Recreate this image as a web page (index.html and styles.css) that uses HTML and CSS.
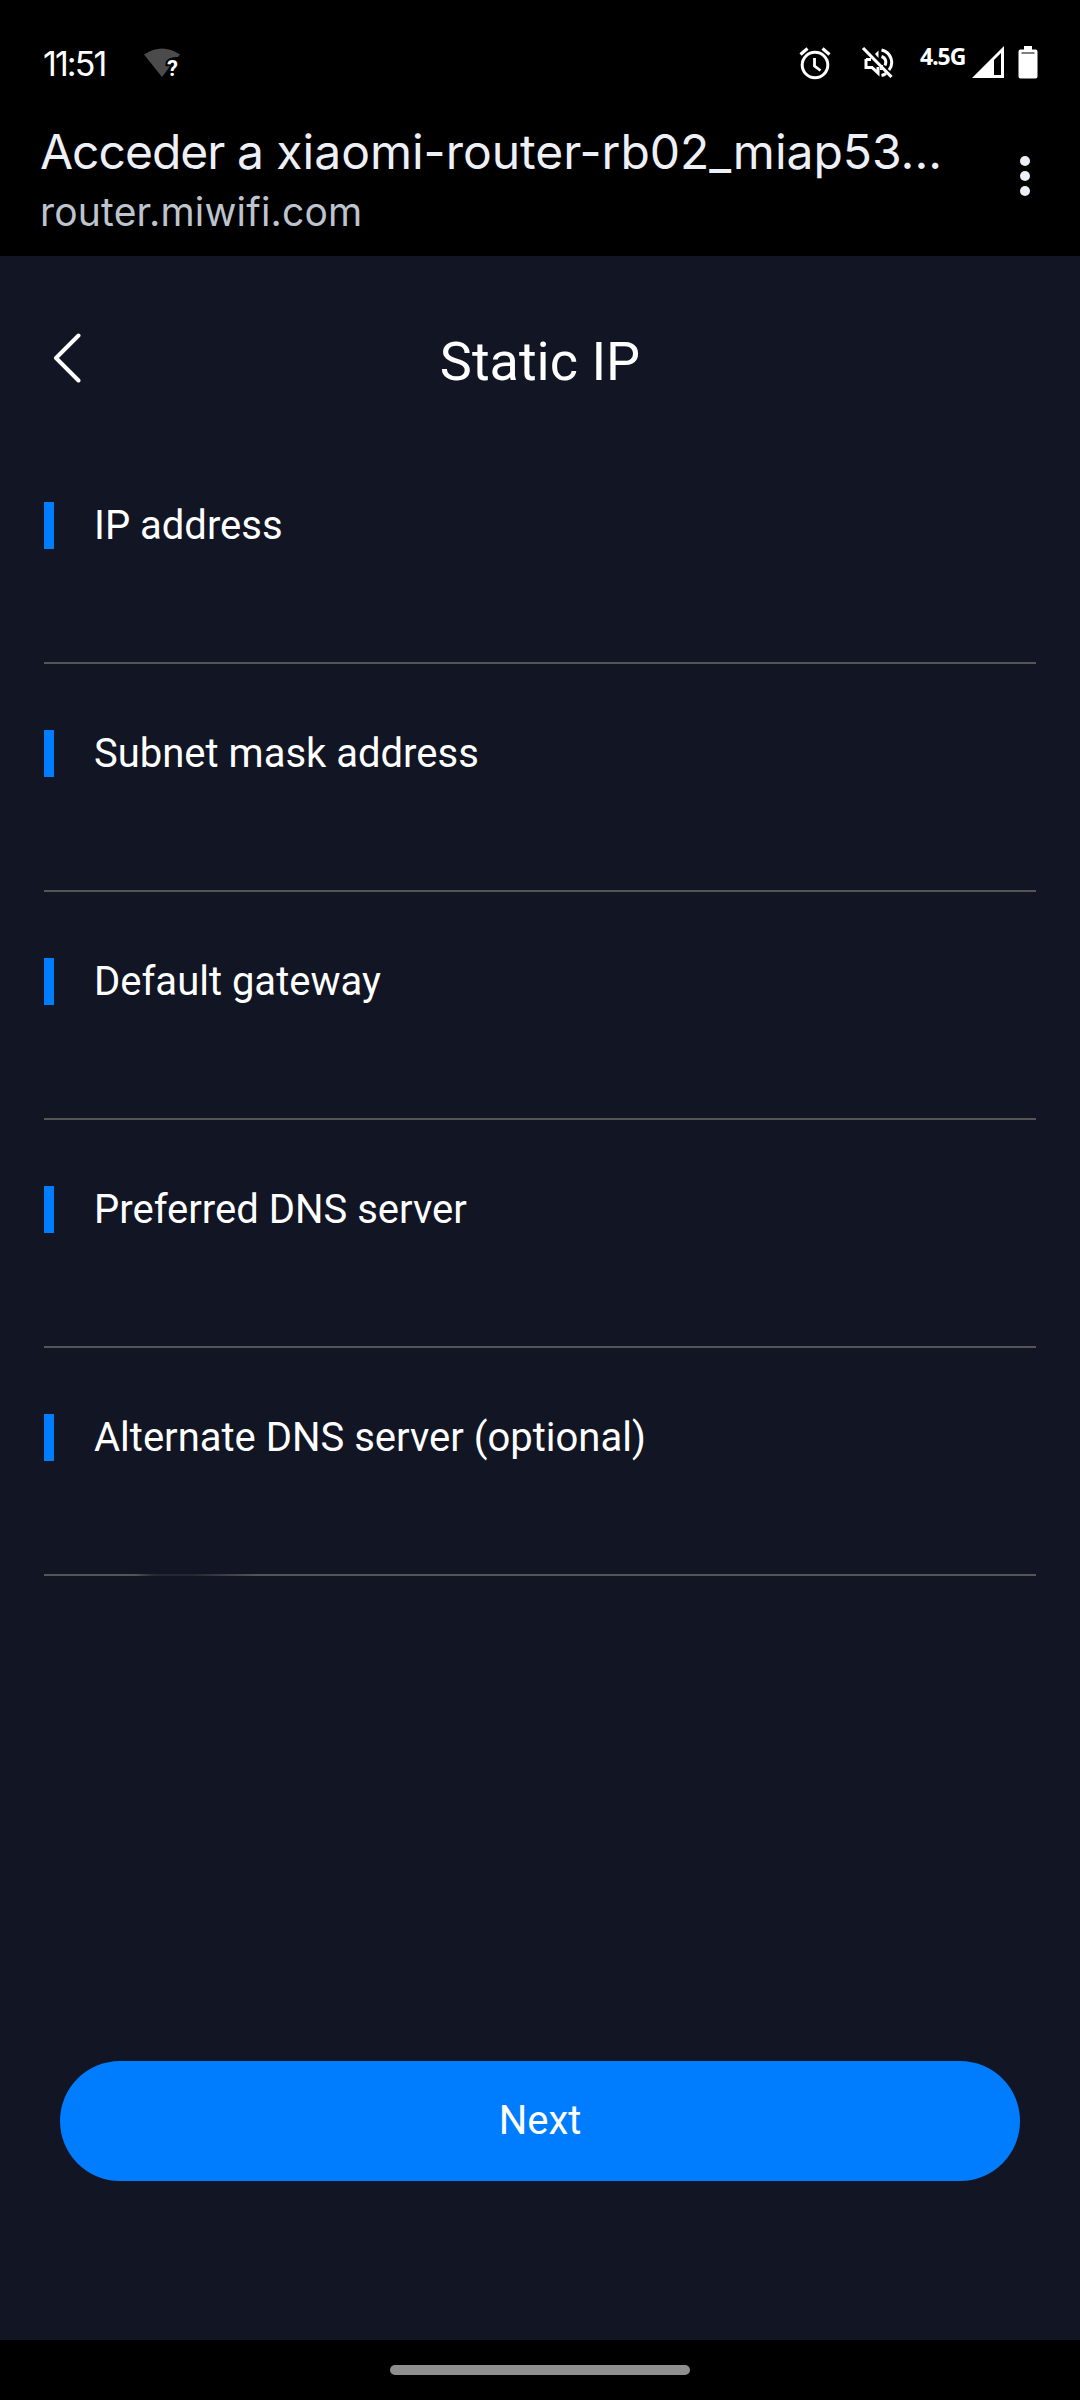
FILE: index.html
```html
<!DOCTYPE html>
<html lang="en">
<head>
<meta charset="utf-8">
<title>Static IP</title>
<link rel="stylesheet" href="styles.css">
</head>
<body>
<div class="status">
  <span class="time">11:51</span>
  <svg class="wifi" width="40" height="32" viewBox="0 0 40 32"><path d="M1 6.500Q19-5.500 37 6.500L35 9Q24.500 8 23.500 16L27 18.500L19 29Z" fill="#4b4b4b"/><text class="unknown" x="24" y="28">?</text></svg>
  <svg class="alarm" width="32" height="34" viewBox="0 0 32 34" fill="none" stroke="#fff"><circle cx="16" cy="19" r="12.800" stroke-width="3"/><path d="M1.500 8.500L8.500 2.500M30.500 8.500L23.500 2.500" stroke-width="3.200"/><path d="M15.500 12V20L21.500 24.500" stroke-width="2.800"/></svg>
  <svg class="mute" width="34" height="34" viewBox="0 0 34 34" fill="none" stroke="#fff"><path d="M6 13V21.500H12L18 27V21M6 13.500H11" stroke-width="3"/><path d="M15 8L18.500 4.500V12Z" fill="#fff" stroke="none"/><path d="M21.500 4C32 6.500 34 18 29 24M21.500 10.500C26 12 26.500 16 25 19.500M21.500 29.500Q24 29 26 27.500M21.500 19V24" stroke-width="3"/><path d="M3 2L31.500 31" stroke-width="3.200"/></svg>
  <span class="network">4.5G</span>
  <svg class="signal" width="32" height="32" viewBox="0 0 32 32"><path fill="#fff" fill-rule="evenodd" d="M0 32L32 0V32ZM22 14V29H29V7Z"/></svg>
  <svg class="battery" width="20" height="33" viewBox="0 0 20 33"><path fill="#fff" d="M6 0H14V3.500H17.500Q19.500 3.500 19.500 5.500V30.500Q19.500 32.500 17.500 32.500H2.500Q.500 32.500 .500 30.500V5.500Q.500 3.500 2.500 3.500H6Z"/><path d="M3.500 7H16.500" stroke="#000"/></svg>
</div>
<header class="browser">
  <div class="page-info">
    <div class="page-title"><span class="lead">Acceder a</span> xiaomi-router-rb02_miap53...</div>
    <div class="page-url">router.miwifi.com</div>
  </div>
  <div class="more"><i></i><i></i><i></i></div>
</header>
<main class="screen">
  <div class="nav">
    <svg class="back" width="28" height="50" viewBox="0 0 28 50"><path d="M25.500 2.500L3 25L25.500 47.500" fill="none" stroke="#fff" stroke-width="4" stroke-linecap="round" stroke-linejoin="round"/></svg>
    <h1>Static IP</h1>
  </div>
  <div class="fields">
    <div class="field"><label>IP address</label></div>
    <div class="field"><label>Subnet mask address</label></div>
    <div class="field"><label>Default gateway</label></div>
    <div class="field"><label>Preferred DNS server</label></div>
    <div class="field faded"><label>Alternate DNS server (optional)</label></div>
  </div>
  <button class="next">Next</button>
</main>
<footer class="gesture"><div class="pill"></div></footer>
</body>
</html>
```
FILE: styles.css
```css
* { box-sizing: border-box; }
body {
  margin: 0;
  width: 1080px;
  height: 2400px;
  display: flex;
  flex-direction: column;
  background: #000;
  color: #fff;
  font-family: Roboto, sans-serif;
}
svg { display: block; flex: none; }
.status {
  height: 120px;
  padding: 46px 42px 0 43px;
  display: flex;
  align-items: flex-start;
  font-family: Inter, sans-serif;
}
.time { width: 100px; font-size: 34px; line-height: 36px; letter-spacing: -1.9px; white-space: nowrap; }
.wifi { margin-top: 2px; }
.unknown { font: bold 22px Roboto, sans-serif; fill: #fff; stroke: #000; stroke-width: 4px; paint-order: stroke; }
.alarm { margin: 0 0 0 616px; }
.mute { margin-left: 29px; }
.network { width: 46px; margin: -4px 0 0 26px; font: bold 23px/28px "Noto Sans", sans-serif; letter-spacing: -1px; white-space: nowrap; }
.signal { margin-left: 6px; }
.battery { margin-left: auto; }
.browser {
  height: 136px;
  padding: 0 50px 0 40px;
  display: flex;
  justify-content: space-between;
}
.page-info { white-space: nowrap; font-family: Inter, sans-serif; }
.page-title { font-size: 48px; line-height: 64px; color: #eef0f8; }
.lead { letter-spacing: -1px; }
.page-url { font-size: 39px; line-height: 56px; letter-spacing: 0.2px; color: #bdc4ce; }
.more { display: flex; flex-direction: column; gap: 5px; padding-top: 36px; }
.more i { width: 10px; height: 10px; border-radius: 50%; background: #eef0f8; }
.screen {
  height: 2084px;
  background: #111524;
  display: flex;
  flex-direction: column;
}
.nav {
  height: 180px;
  padding: 0 53px;
  display: grid;
  grid-template-columns: 28px 1fr 28px;
}
.back { margin-top: 77px; }
h1 { margin: 74px 0 0; font-size: 54px; line-height: 64px; font-weight: 400; text-align: center; }
.fields { padding: 0 44px; }
.field { height: 228px; padding-top: 66px; border-bottom: 2px solid #555; }
label {
  display: block;
  height: 47px;
  padding-left: 40px;
  border-left: 10px solid #007dff;
  font-size: 40px;
  line-height: 47px;
}
.faded { border-image: linear-gradient(90deg, #555 92px, #252735 112px, #252735 150px, #555 215px) 2; }
.next {
  height: 120px;
  margin: auto 60px 159px;
  padding: 0 0 2px;
  border: 0;
  border-radius: 60px;
  background: #007dff;
  color: #fff;
  font: 40px/47px Roboto, sans-serif;
}
.gesture { height: 60px; display: flex; justify-content: center; align-items: flex-start; padding-top: 25px; }
.pill { width: 300px; height: 10px; border-radius: 5px; background: #8f8f8f; }
```
